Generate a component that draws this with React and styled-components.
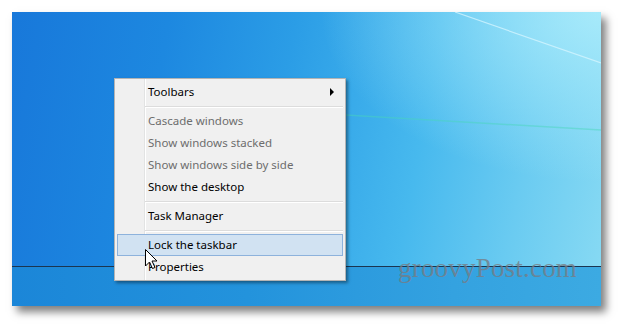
import React from "react";
import styled, { createGlobalStyle, css } from "styled-components";

const GlobalStyle = createGlobalStyle`
  html, body { margin: 0; padding: 0; background: #ffffff; }
  #root { width: 621px; height: 326px; }
`;

const Frame = styled.div`
  width: 621px;
  height: 326px;
  box-sizing: border-box;
  padding: 12px 20px 20px 12px;
  background: #ffffff;
`;

const Screen = styled.div`
  position: relative;
  width: 589px;
  height: 294px;
  display: flex;
  flex-direction: column;
  overflow: hidden;
  box-shadow: 5px 6px 8px rgba(0, 0, 0, 0.5);
`;

const Wallpaper = styled.div`
  position: relative;
  flex: 1;
  background:
    radial-gradient(ellipse 280px 170px at 100% 0%, rgba(175, 238, 252, 0.85), rgba(175, 238, 252, 0) 100%),
    linear-gradient(100deg, #1878da 0%, #1d88e0 25%, #2b9de6 45%, #47b9ee 68%, #6acbf1 85%, #86d9f3 100%);
`;

const Streaks = styled.svg`
  position: absolute;
  inset: 0;
  width: 100%;
  height: 100%;
  pointer-events: none;
`;

const Taskbar = styled.div`
  height: 39px;
  border-top: 1px solid #1b3550;
  background: linear-gradient(90deg, #1b86d8 0%, #2393dc 40%, #34a2e0 75%, #3caae2 100%);
`;

const Menu = styled.div`
  position: absolute;
  left: 102px;
  top: 66px;
  width: 232px;
  box-sizing: border-box;
  padding: 2px;
  border: 1px solid #b4b4b4;
  background:
    linear-gradient(90deg, transparent 0 29px, #e2e3e3 29px 30px, #ffffff 30px 31px, transparent 31px),
    #f0f0f0;
  box-shadow: 2px 2px 3px rgba(0, 0, 0, 0.4);
  font-family: "Segoe UI", "Noto Sans", "Open Sans", sans-serif;
  font-size: 11.5px;
  display: flex;
  flex-direction: column;
`;

const Item = styled.div`
  height: 22px;
  box-sizing: border-box;
  display: flex;
  align-items: center;
  padding: 0 0 1px 30px;
  border: 1px solid transparent;
  color: ${(p) => (p.$disabled ? "#6d6d6d" : "#000000")};
  white-space: nowrap;
  ${(p) =>
    p.$active &&
    css`
      background: #d1e2f2;
      border-color: #8db2dc;
    `}
`;

const Arrow = styled.span`
  margin-left: auto;
  margin-right: 8px;
  width: 0;
  height: 0;
  border-top: 4px solid transparent;
  border-bottom: 4px solid transparent;
  border-left: 4px solid #000;
`;

const Separator = styled.div`
  margin: 3px 0 2px 28px;
  height: 1px;
  background: #dcdcdc;
  border-bottom: 1px solid #ffffff;
`;

const Watermark = styled.div`
  position: absolute;
  left: 386px;
  top: 241px;
  font-family: "Liberation Serif", "Times New Roman", serif;
  font-size: 27px;
  color: rgba(118, 124, 132, 0.8);
  letter-spacing: 0.2px;
  pointer-events: none;
`;

const Cursor = styled.svg`
  position: absolute;
  left: 133px;
  top: 237px;
  width: 13px;
  height: 21px;
  pointer-events: none;
`;

const items = [
  { label: "Toolbars", sub: true },
  "sep",
  { label: "Cascade windows", disabled: true },
  { label: "Show windows stacked", disabled: true },
  { label: "Show windows side by side", disabled: true },
  { label: "Show the desktop" },
  "sep",
  { label: "Task Manager" },
  "sep",
  { label: "Lock the taskbar", active: true },
  { label: "Properties" },
];

export default function App() {
  return (
    <>
      <GlobalStyle />
      <Frame>
        <Screen>
          <Wallpaper>
            <Streaks viewBox="0 0 589 254">
              <line x1="443" y1="0" x2="589" y2="51" stroke="rgba(215,245,255,0.75)" strokeWidth="1.2" />
              <line x1="300" y1="101" x2="589" y2="118" stroke="rgba(70,215,185,0.45)" strokeWidth="1.5" />
            </Streaks>
          </Wallpaper>
          <Taskbar />
          <Menu>
            {items.map((it, i) =>
              it === "sep" ? (
                <Separator key={i} />
              ) : (
                <Item key={i} $disabled={it.disabled} $active={it.active}>
                  {it.label}
                  {it.sub && <Arrow />}
                </Item>
              )
            )}
          </Menu>
          <Watermark>groovyPost.com</Watermark>
          <Cursor viewBox="0 0 13 21">
            <path
              d="M0.5 0.5 L0.5 17 L4.5 13 L7.5 19.5 L10 18.5 L7 12 L12 12 Z"
              fill="#ffffff"
              stroke="#000000"
              strokeWidth="1"
              strokeLinejoin="miter"
            />
          </Cursor>
        </Screen>
      </Frame>
    </>
  );
}
